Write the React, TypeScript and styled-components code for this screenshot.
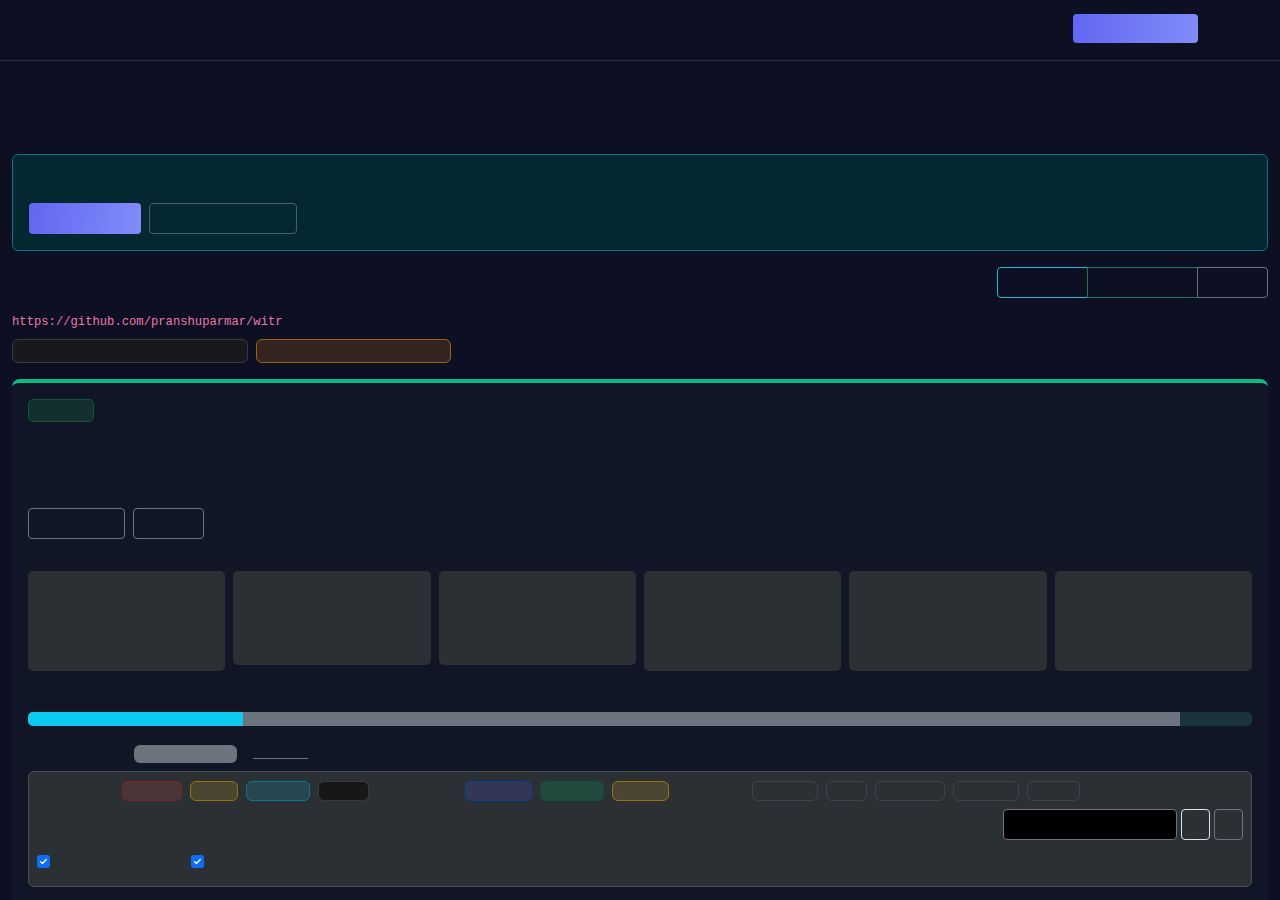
import React from "react";
import styled, { createGlobalStyle } from "styled-components";

const GlobalStyle = createGlobalStyle`
  html, body {
    margin: 0;
    padding: 0;
    background: #0d0f22;
    font-family: "Inter", "Liberation Sans", sans-serif;
  }
  * { box-sizing: border-box; }
`;

const Header = styled.header`
  height: 61px;
  border-bottom: 1px solid #27284b;
  display: flex;
  justify-content: flex-end;
  align-items: flex-start;
  padding: 14px 82px 0 0;
`;

const GradientButton = styled.button<{ $w: number; $h: number }>`
  width: ${(p) => p.$w}px;
  height: ${(p) => p.$h}px;
  border: none;
  border-radius: 4px;
  background: linear-gradient(100deg, #6366f1, #818cf8);
  padding: 0;
`;

const Main = styled.main`
  padding: 0 12px;
`;

const Banner = styled.section`
  margin-top: 93px;
  background: #032830;
  border: 1px solid #0e6f86;
  border-radius: 6px;
  padding: 48px 16px 16px;
  display: flex;
  gap: 8px;
`;

const OutlineButton = styled.button<{ $w: number; $border?: string; $fill?: string }>`
  width: ${(p) => p.$w}px;
  height: 31px;
  padding: 0;
  border: 1px solid ${(p) => p.$border || "#4b5d63"};
  background: ${(p) => p.$fill || "transparent"};
  border-radius: 4px;
`;

const SegmentRow = styled.div`
  margin-top: 16px;
  display: flex;
  justify-content: flex-end;
`;

const Segment = styled.div<{ $w: number; $color: string; $pos: "first" | "mid" | "last" }>`
  position: relative;
  width: ${(p) => p.$w}px;
  height: 31px;
  border: 1px solid ${(p) => p.$color};
  margin-left: ${(p) => (p.$pos === "first" ? 0 : -1)}px;
  border-radius: ${(p) =>
    p.$pos === "first" ? "4px 0 0 4px" : p.$pos === "last" ? "0 4px 4px 0" : "0"};
`;

const RepoLink = styled.div`
  margin-top: 15px;
  font-family: "Liberation Mono", "DejaVu Sans Mono", monospace;
  font-size: 12.2px;
  line-height: 18px;
  color: #e879a9;
`;

const PillRow = styled.div`
  margin-top: 8px;
  display: flex;
  gap: 8px;
`;

const Pill = styled.div<{ $w: number; $bg: string; $border: string }>`
  width: ${(p) => p.$w}px;
  height: 24px;
  background: ${(p) => p.$bg};
  border: 1px solid ${(p) => p.$border};
  border-radius: 6px;
`;

const Card = styled.section`
  margin-top: 16px;
  background: #101626;
  border-top: 4px solid #10b981;
  border-radius: 8px 8px 0 0;
  padding: 16px 16px 13px;
`;

const Badge = styled.div`
  width: 66px;
  height: 23px;
  background: #12302e;
  border: 1px solid #14523a;
  border-radius: 5px;
`;

const ActionRow = styled.div`
  margin-top: 86px;
  display: flex;
  gap: 8px;
`;

const StatGrid = styled.div`
  margin-top: 32px;
  display: grid;
  grid-template-columns: repeat(6, 1fr);
  gap: 8px;
  align-items: start;
`;

const StatBox = styled.div<{ $h: number }>`
  height: ${(p) => p.$h}px;
  background: #2b3035;
  border-radius: 5px;
`;

const Progress = styled.div`
  margin-top: 41px;
  height: 14px;
  border-radius: 5px;
  background: #1a3539;
  display: flex;
  overflow: hidden;
`;

const ProgressSeg = styled.div<{ $color: string }>`
  height: 100%;
  background: ${(p) => p.$color};
`;

const FilterHead = styled.div`
  margin-top: 19px;
  padding-left: 106px;
  display: flex;
  align-items: flex-start;
  gap: 16px;
  height: 18px;
`;

const GrayPill = styled.div`
  width: 103px;
  height: 18px;
  background: #6c757d;
  border-radius: 6px;
`;

const Underline = styled.div`
  width: 55px;
  height: 14px;
  border-bottom: 1px solid #6c757d;
`;

const Panel = styled.div`
  margin-top: 8px;
  background: #2b3035;
  border: 1px solid #495057;
  border-radius: 6px;
  padding: 9px 8px 18px;
  height: 116px;
`;

const ChipRow = styled.div`
  display: flex;
  gap: 8px;
  height: 20px;
`;

const Spacer = styled.div<{ $w: number }>`
  width: ${(p) => p.$w}px;
  flex-shrink: 0;
`;

const Chip = styled.div<{ $w: number; $bg: string; $border: string }>`
  width: ${(p) => p.$w}px;
  height: 20px;
  background: ${(p) => p.$bg};
  border: 1px solid ${(p) => p.$border};
  border-radius: 6px;
`;

const SearchRow = styled.div`
  margin-top: 8px;
  display: flex;
  justify-content: flex-end;
  gap: 4px;
`;

const SearchInput = styled.div`
  width: 174px;
  height: 31px;
  background: #000;
  border: 1px solid #6c757d;
  border-radius: 4px;
`;

const IconButton = styled.div<{ $border: string }>`
  width: 29px;
  height: 31px;
  border: 1px solid ${(p) => p.$border};
  border-radius: 4px;
`;

const CheckRow = styled.div`
  margin-top: 15px;
  display: flex;
  gap: 141px;
`;

const CheckBox = styled.div`
  width: 13px;
  height: 13px;
  border-radius: 3px;
  background: #0d6efd;
  display: flex;
  align-items: center;
  justify-content: center;
`;

const Check = () => (
  <CheckBox>
    <svg width="9" height="9" viewBox="0 0 16 16">
      <path d="M3 8.5l3 3 7-7" fill="none" stroke="#fff" strokeWidth="2.4" strokeLinecap="round" strokeLinejoin="round" />
    </svg>
  </CheckBox>
);

const stats = [100, 94, 94, 100, 100, 100];

const chipsA = [
  { w: 60, bg: "#4b3539", border: "#842029" },
  { w: 48, bg: "#4b4532", border: "#997404" },
  { w: 64, bg: "#26474f", border: "#087990" },
  { w: 51, bg: "#171717", border: "#373b3e" },
];

const chipsB = [
  { w: 67, bg: "#313754", border: "#084298" },
  { w: 64, bg: "#234a3e", border: "#0f5132" },
  { w: 57, bg: "#4b4532", border: "#997404" },
];

const chipsC = [66, 41, 70, 66, 53];

const App = () => {
  return (
    <>
      <GlobalStyle />
      <Header>
        <GradientButton $w={125} $h={29} />
      </Header>
      <Main>
        <Banner>
          <GradientButton $w={112} $h={31} />
          <OutlineButton $w={148} />
        </Banner>

        <SegmentRow>
          <Segment $w={91} $color="#22b5d6" $pos="first" />
          <Segment $w={111} $color="#1c7a4c" $pos="mid" />
          <Segment $w={71} $color="#6b7280" $pos="last" />
        </SegmentRow>

        <RepoLink>https://github.com/pranshuparmar/witr</RepoLink>

        <PillRow>
          <Pill $w={236} $bg="#18191c" $border="#3a3b3f" />
          <Pill $w={195} $bg="#33241f" $border="#a16207" />
        </PillRow>

        <Card>
          <Badge />
          <ActionRow>
            <OutlineButton $w={97} $border="#6b7280" />
            <OutlineButton $w={71} $border="#6b7280" />
          </ActionRow>

          <StatGrid>
            {stats.map((h, i) => (
              <StatBox $h={h} key={i} />
            ))}
          </StatGrid>

          <Progress>
            <ProgressSeg $color="#0dcaf0" style={{ width: "17.57%" }} />
            <ProgressSeg $color="#6c757d" style={{ width: "76.55%" }} />
          </Progress>

          <FilterHead>
            <GrayPill />
            <Underline />
          </FilterHead>

          <Panel>
            <ChipRow>
              <Spacer $w={77} />
              {chipsA.map((c, i) => (
                <Chip key={i} $w={c.w} $bg={c.bg} $border={c.border} />
              ))}
              <Spacer $w={80} />
              {chipsB.map((c, i) => (
                <Chip key={i} $w={c.w} $bg={c.bg} $border={c.border} />
              ))}
              <Spacer $w={67} />
              {chipsC.map((w, i) => (
                <Chip key={i} $w={w} $bg="transparent" $border="#3e444a" />
              ))}
            </ChipRow>

            <SearchRow>
              <SearchInput />
              <IconButton $border="#dee2e6" />
              <IconButton $border="#6c757d" />
            </SearchRow>

            <CheckRow>
              <Check />
              <Check />
            </CheckRow>
          </Panel>
        </Card>
      </Main>
    </>
  );
};

export default App;
